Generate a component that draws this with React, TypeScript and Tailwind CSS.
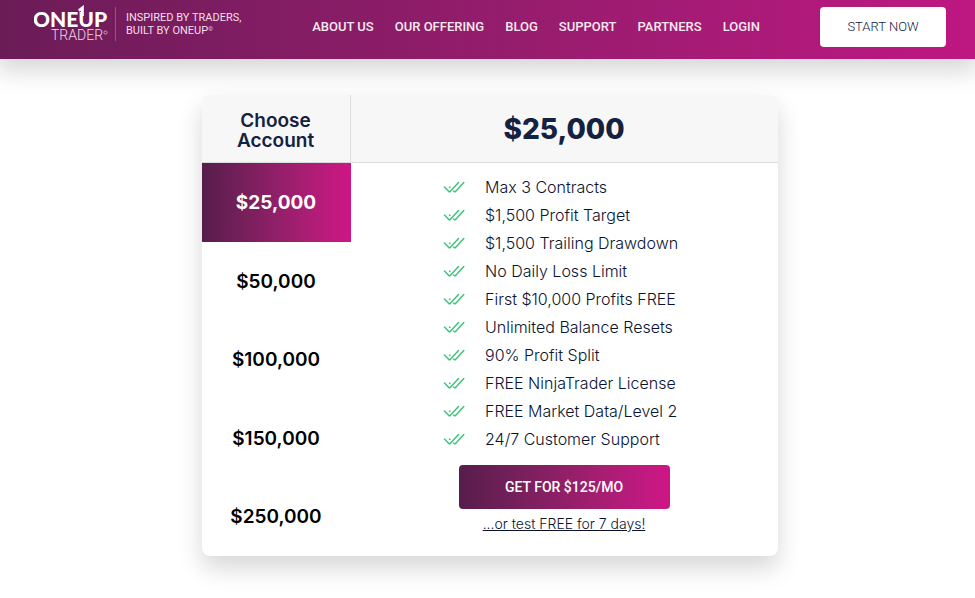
import React, { useState } from 'react';
import clsx from 'clsx';

const navLinks = [
  { label: 'About us', href: '#about' },
  { label: 'Our offering', href: '#offering' },
  { label: 'Blog', href: '#blog' },
  { label: 'Support', href: '#support' },
  { label: 'Partners', href: '#partners' },
  { label: 'Login', href: '#login' },
];

const accounts = [
  { size: '$25,000', contracts: 3, target: '$1,500', drawdown: '$1,500', price: '$125' },
  { size: '$50,000', contracts: 6, target: '$3,000', drawdown: '$2,500', price: '$150' },
  { size: '$100,000', contracts: 12, target: '$6,000', drawdown: '$3,500', price: '$300' },
  { size: '$150,000', contracts: 15, target: '$9,000', drawdown: '$5,000', price: '$350' },
  { size: '$250,000', contracts: 25, target: '$15,000', drawdown: '$5,500', price: '$650' },
];

const Logo: React.FC = () => (
  <svg className="h-10 w-[75px] shrink-0" viewBox="0 -2 75 40" role="img" aria-label="OneUp Trader">
    <text x="-1" y="21" fill="#fff" fontFamily="Lato, sans-serif" fontSize="21" fontWeight="900">
      ONEUP
    </text>
    <text x="17" y="34" fill="#efd6e5" fontFamily="Roboto, sans-serif" fontSize="14" fontWeight="300">
      TRADER
    </text>
    {/* The left stem of the U runs up into a "1" */}
    <path d="M44.8 4.6 L48.4 1.8 V10" fill="none" stroke="#fff" strokeWidth="2.8" />
    <circle cx="71.5" cy="26.5" r="1.6" fill="none" stroke="#e3b8d3" strokeWidth="0.8" />
  </svg>
);

const DoubleCheck: React.FC = () => (
  <svg
    className="h-3 w-[22px] shrink-0"
    viewBox="0 0 22 12"
    fill="none"
    stroke="#3fc47c"
    strokeWidth="1.5"
    strokeLinecap="round"
    strokeLinejoin="round"
    aria-hidden="true"
  >
    <path d="M1.5 6 L6 10.7 H7 L15.5 1.5" />
    <path d="M6.5 6 L7 6.5" />
    <path d="M10.5 10 L11.5 10.7 H12.3 L20.8 1.5" />
  </svg>
);

const Header: React.FC = () => (
  <header className="flex h-[59px] items-start bg-linear-to-r from-[#6b1c57] to-[#be1782] pr-[29px] pl-[34px] shadow-[0_8px_24px_4px_rgba(0,0,0,0.16)]">
    <a href="#home" className="flex shrink-0 items-center pt-1">
      <Logo />
      <span className="ml-1.5 h-[34px] w-px bg-white/25" />
      <span className="ml-2.5 text-[11px] leading-[13px] whitespace-nowrap text-[#f3dfeb]">
        INSPIRED BY TRADERS,
        <br />
        BUILT BY ONEUP
        <sup className="text-[6px]">©</sup>
      </span>
    </a>
    <nav className="mr-[60px] ml-auto flex gap-[21px] pt-[17px]">
      {navLinks.map(link => (
        <a
          key={link.label}
          href={link.href}
          className="text-[13px] leading-5 font-medium whitespace-nowrap text-[#f7e9f2] uppercase"
        >
          {link.label}
        </a>
      ))}
    </nav>
    <button
      type="button"
      className="mt-[7px] h-10 w-[126px] shrink-0 rounded bg-white text-[13px] font-light text-[#14213f]"
    >
      START NOW
    </button>
  </header>
);

const App: React.FC = () => {
  const [selected, setSelected] = useState(0);
  const account = accounts[selected];

  const features = [
    `Max ${account.contracts} Contracts`,
    `${account.target} Profit Target`,
    `${account.drawdown} Trailing Drawdown`,
    'No Daily Loss Limit',
    'First $10,000 Profits FREE',
    'Unlimited Balance Resets',
    '90% Profit Split',
    'FREE NinjaTrader License',
    'FREE Market Data/Level 2',
    '24/7 Customer Support',
  ];

  return (
    <div className="min-h-screen bg-white font-[Roboto,sans-serif] text-[#14213f]">
      <Header />
      <main className="pt-9 pr-4 pb-10 pl-5">
        <section className="mx-auto flex max-w-xl overflow-hidden rounded-lg bg-white shadow-[0_12px_24px_rgba(0,0,0,0.16)]">
          {/* Account sizes */}
          <div className="flex w-[149px] shrink-0 flex-col">
            <h2 className="flex h-[68px] items-center justify-center border-r border-b border-[#dcdcdc] bg-[#f7f7f7] pt-1 text-center font-[Inter,sans-serif] text-[19px] leading-5 font-semibold">
              Choose
              <br />
              Account
            </h2>
            {accounts.map((item, index) => (
              <button
                key={item.size}
                type="button"
                aria-pressed={index === selected}
                onClick={() => setSelected(index)}
                className={clsx(
                  'flex-1 pt-0.5 font-[Inter,sans-serif] text-[19px]',
                  index === selected
                    ? 'bg-linear-to-r from-[#571d4b] to-[#cf1586] font-bold text-white'
                    : 'font-semibold text-black'
                )}
              >
                {item.size}
              </button>
            ))}
          </div>

          {/* Plan details */}
          <div className="flex flex-1 flex-col items-center">
            <h3 className="flex h-[68px] w-full items-center justify-center border-b border-[#dcdcdc] bg-[#f7f7f7] font-[Inter,sans-serif] text-[28px] font-extrabold">
              {account.size}
            </h3>
            <ul className="mt-2.5 w-[242px] font-[Inter,sans-serif] text-base leading-7 font-light text-[#0a1430]">
              {features.map(feature => (
                <li key={feature} className="flex items-center gap-5 whitespace-nowrap">
                  <DoubleCheck />
                  {feature}
                </li>
              ))}
            </ul>
            <button
              type="button"
              className="mt-3 h-11 w-[211px] rounded bg-linear-to-r from-[#571d4b] to-[#cf1586] text-sm font-medium text-white"
            >
              GET FOR {account.price}/MO
            </button>
            <a
              href="#trial"
              className="mt-[5px] mb-[22px] font-[Inter,sans-serif] text-sm leading-5 font-light text-[#0a1430] underline"
            >
              ...or test FREE for 7 days!
            </a>
          </div>
        </section>
      </main>
    </div>
  );
};

export default App;
